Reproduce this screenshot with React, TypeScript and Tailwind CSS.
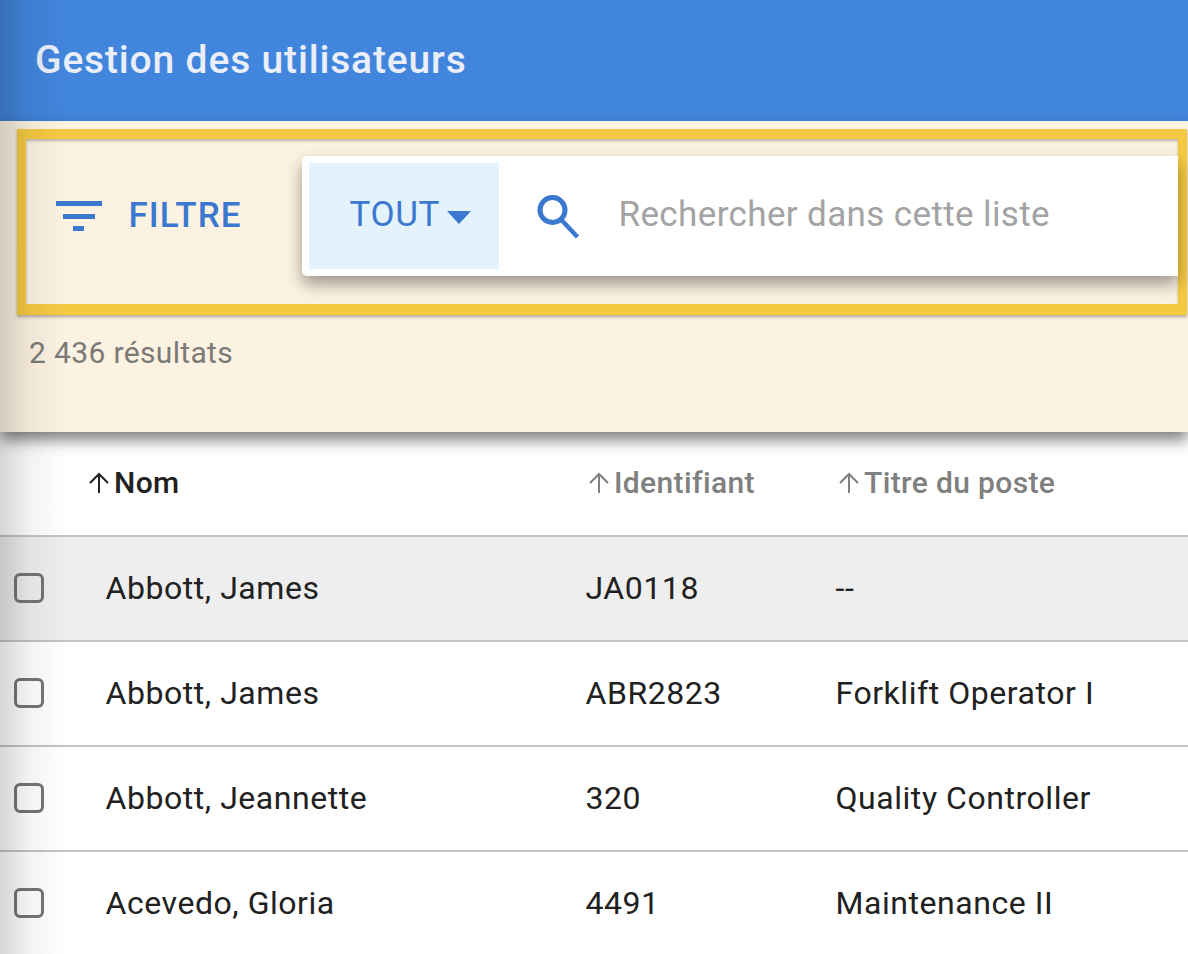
import React from "react";

const rows = [
  ["Abbott, James", "JA0118", "--"],
  ["Abbott, James", "ABR2823", "Forklift Operator I"],
  ["Abbott, Jeannette", "320", "Quality Controller"],
  ["Acevedo, Gloria", "4491", "Maintenance II"],
];

function Arrow({ color }: { color: string }) {
  return (
    <svg width="22" height="22" viewBox="0 0 22 22" fill="none" stroke={color} strokeWidth="2" className="shrink-0">
      <path d="M11 21V2M2 11L11 2L20 11" />
    </svg>
  );
}

export default function App() {
  return (
    <div className="relative w-[1188px] h-[954px] overflow-hidden bg-white font-['Roboto',sans-serif]">
      <header className="h-[121px] bg-[#4285dc] flex items-center pl-[35px]">
        <h1 className="text-[39px] font-medium text-[#e9eef8] tracking-[0.83px]">Gestion des utilisateurs</h1>
      </header>

      <section className="relative z-10 h-[311px] bg-[#fcf2e1] pt-[8px] pl-[17px] pr-px shadow-[0_8px_14px_rgba(0,0,0,0.5)]">
        <div className="h-[186px] border-x-[9.5px] border-t-[10px] border-b-[11px] border-[#f4c942] shadow-[0_2px_3px_rgba(0,0,0,0.3),inset_0_2px_3px_rgba(0,0,0,0.25)] flex items-center pb-[11px]">
          <svg width="46" height="30" viewBox="0 0 46 30" className="ml-[29.5px] shrink-0 fill-[#3b78d0]">
            <rect x="0" y="0" width="46" height="5" />
            <rect x="7" y="13" width="32" height="5" />
            <rect x="17" y="25" width="11" height="5" />
          </svg>
          <span className="ml-[27px] mb-[2px] w-[113px] text-[35px] font-medium leading-none text-[#3b78d0] tracking-[1px]">FILTRE</span>
          <div className="ml-[60px] flex-1 h-[120px] bg-white rounded-l-[5px] p-[7px] flex items-center shadow-[0_8px_16px_rgba(0,0,0,0.38)]">
            <div className="w-[190px] h-[106px] bg-[#e4f2fc] flex items-center pl-[41px] gap-[7px]">
              <span className="mb-[3px] text-[35px] leading-none text-[#3b78d0] tracking-[0.6px]">TOUT</span>
              <svg width="24" height="13" viewBox="0 0 24 13" className="fill-[#3b78d0] mt-[2px]"><path d="M0 0h24L12 13z" /></svg>
            </div>
            <svg width="46" height="46" viewBox="0 0 46 46" fill="none" stroke="#3b78d0" className="ml-[36px] shrink-0">
              <circle cx="17.5" cy="17" r="12.5" strokeWidth="5" />
              <path d="M26 26.5L42.5 44" strokeWidth="4.5" />
            </svg>
            <span className="ml-[38px] mb-[3px] text-[35px] leading-none text-[#a3a3a3] tracking-[0.37px]">Rechercher dans cette liste</span>
          </div>
        </div>
        <div className="pl-[12px] mt-[23px] text-[30px] leading-none text-[#7b7a76] tracking-[0.35px]">2 436 résultats</div>
      </section>

      <div className="h-[103px] flex items-center pb-[2px] text-[30px] font-medium tracking-[0.36px] text-[#808080]">
        <div className="w-[588px] pl-[88px] flex items-center gap-[4px] text-[#212121]"><Arrow color="#212121" /><span>Nom</span></div>
        <div className="w-[250px] flex items-center gap-[4px]"><Arrow color="#808080" /><span>Identifiant</span></div>
        <div className="flex items-center gap-[4px]"><Arrow color="#808080" /><span>Titre du poste</span></div>
      </div>

      {rows.map((r, i) => (
        <div key={i} className={`h-[105px] border-t-2 border-[#c4c4c4] flex items-center text-[32px] tracking-[0.55px] text-[#212121] pb-[2px] ${i === 0 ? "bg-[#eeeeee]" : "bg-white"}`}>
          <div className="w-[105.5px] pl-[14px]">
            <div className="w-[30px] h-[30px] rounded-[6px] border-[3px] border-[#757575]" />
          </div>
          <div className="w-[480px]">{r[0]}</div>
          <div className="w-[250px]">{r[1]}</div>
          <div>{r[2]}</div>
        </div>
      ))}

      <div className="absolute z-20 left-0 top-0 bottom-0 w-[65px] pointer-events-none bg-gradient-to-r from-[rgba(0,0,0,0.16)] via-[rgba(0,0,0,0.05)] via-45% to-transparent" />
    </div>
  );
}
